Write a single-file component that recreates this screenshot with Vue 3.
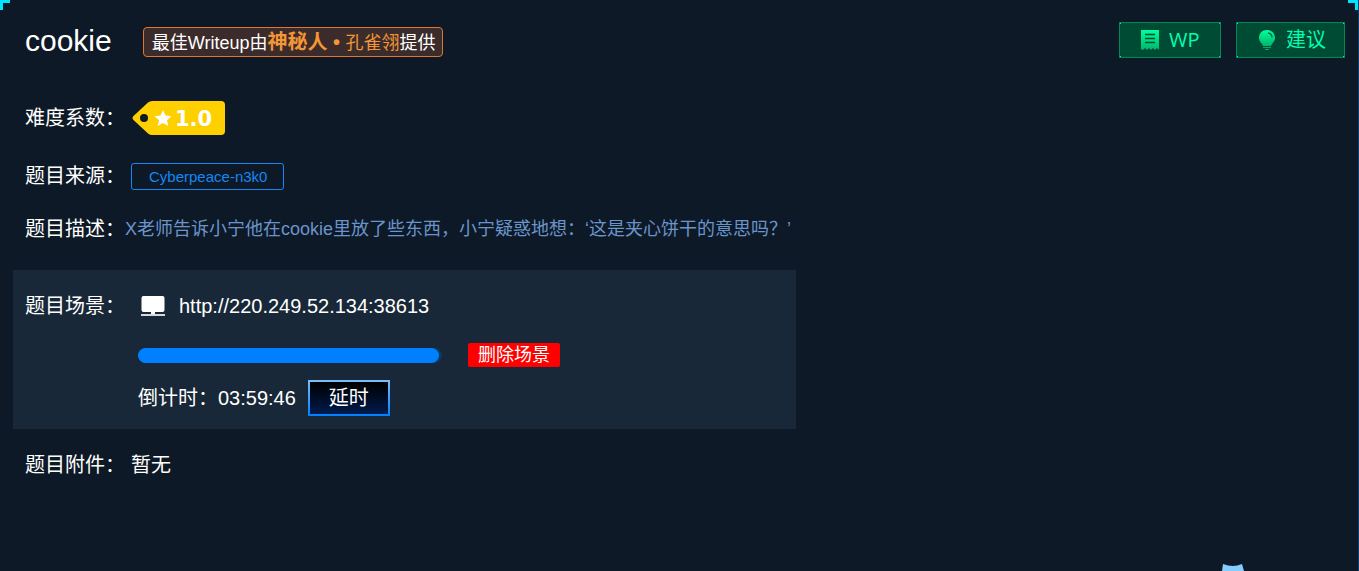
<script setup>
import { ref } from 'vue'

const url = 'http://220.249.52.134:38613'
const remaining = ref('03:59:46')
const progress = ref(99)
</script>

<template>
  <main class="page">
    <svg class="corner corner-left" viewBox="0 0 10 10" aria-hidden="true"><path d="M0 0H10V3H3V10H0Z" /></svg>
    <svg class="corner corner-right" viewBox="0 0 10 10" aria-hidden="true"><path d="M0 0H10V10H7V3H0Z" /></svg>

    <header class="header">
      <h1 class="title">cookie</h1>
      <p class="writeup">最佳Writeup由<b>神秘人&nbsp;•&nbsp;</b><span>孔雀翎</span>提供</p>
      <div class="actions">
        <button type="button" class="action">
          <svg width="20" height="22" viewBox="0 0 20 22" aria-hidden="true">
            <defs>
              <linearGradient id="mint" x1="0" y1="0" x2="0" y2="1">
                <stop offset="0" stop-color="#00ff9c" />
                <stop offset="1" stop-color="#00b56b" />
              </linearGradient>
            </defs>
            <path fill="url(#mint)" d="M1 1H19V21L17 19L15 21L13 19L11 21L9 19L7 21L5 19L3 21L1 20Z" />
            <path d="M5 5.500H15M5 9.500H15M5 13.500H15" stroke="#004b34" stroke-width="1.300" />
          </svg>
          <span>WP</span>
        </button>
        <button type="button" class="action">
          <svg width="20" height="22" viewBox="0 0 20 22" aria-hidden="true">
            <path fill="url(#mint)" d="M10 1C5 1 2 4.500 2 9C2 12.500 5 14 6 17H14C15 14 18 12.500 18 9C18 4.500 15 1 10 1Z" />
            <path d="M11 4C13.500 4.200 15 6 15 8.500" fill="none" stroke="#00633f" stroke-width="1.300" />
            <path d="M6 18.500H14M8 20.500H12" stroke="#00a966" stroke-width="1.200" />
          </svg>
          <span>建议</span>
        </button>
      </div>
    </header>

    <section class="row difficulty">
      <span class="label">难度系数：</span>
      <svg class="tag" width="94" height="34" viewBox="0 0 94 34" role="img" aria-label="1.0">
        <path fill="#ffd000" d="M1.500 15L16 1.500Q18 0 20 0H89Q93 0 93 4V30Q93 34 89 34H20Q18 34 16 32.500L1.500 19Q-.5 17 1.500 15Z" />
        <circle cx="12" cy="17" r="4" fill="#0d1926" />
        <path fill="#fff" d="M31 9L33.500 14.500L39.500 15.200L35 19.200L36.300 25L31 22L25.700 25L27 19.200L22.500 15.200L28.500 14.500Z" />
        <text x="43" y="25" class="tag-text">1.0</text>
      </svg>
    </section>

    <section class="row source">
      <span class="label">题目来源：</span>
      <a href="#" class="source-link">Cyberpeace-n3k0</a>
    </section>

    <section class="row description">
      <span class="label">题目描述：</span>
      <p>X老师告诉小宁他在cookie里放了些东西，小宁疑惑地想：‘这是夹心饼干的意思吗？’</p>
    </section>

    <section class="scene">
      <span class="label">题目场景：</span>
      <div class="scene-body">
        <div class="address">
          <svg width="24" height="22" viewBox="0 0 24 22" aria-hidden="true">
            <rect x=".5" y="1" width="23" height="16" rx="2" fill="#fff" />
            <path fill="#fff" d="M10 17H14V19H10Z" />
            <path fill="#d5d9dd" d="M0 19H24V21H0Z" />
          </svg>
          <span>{{ url }}</span>
        </div>
        <div class="running">
          <div class="track" role="progressbar" aria-label="倒计时" :aria-valuenow="progress">
            <div class="bar" :style="{ width: progress + '%' }"></div>
          </div>
          <button type="button" class="delete">删除场景</button>
        </div>
        <div class="countdown">
          <span>倒计时：{{ remaining }}</span>
          <button type="button" class="extend">延时</button>
        </div>
      </div>
    </section>

    <section class="row attachment">
      <span class="label">题目附件：</span>
      <span>暂无</span>
    </section>

    <svg class="mascot" viewBox="0 0 24 8" aria-hidden="true">
      <path fill="#86ccff" d="M2 1Q12 5 21 1L23 8H1Z" />
    </svg>
  </main>
</template>

<style>
body {
  margin: 0;
  background: #0d1926;
}
</style>

<style scoped>
.page {
  position: relative;
  box-sizing: border-box;
  min-height: 100vh;
  padding: 22px 13px 24px;
  overflow: hidden;
  border-right: 1px solid #073f72;
  background: #0d1926;
  color: #fff;
  font-family: "Liberation Sans", "Noto Sans CJK SC", sans-serif;
  font-size: 20px;
  line-height: 28px;
}
h1,
p {
  margin: 0;
  font-weight: 400;
}
button {
  font-family: inherit;
  cursor: pointer;
}
.corner {
  position: absolute;
  top: 0;
  width: 10px;
  height: 10px;
  fill: #00e5ff;
}
.corner-left {
  left: 0;
}
.corner-right {
  right: 0;
}
.header {
  display: flex;
  align-items: flex-start;
  padding-left: 12px;
}
.title {
  font-size: 30px;
  line-height: 38px;
}
.writeup {
  margin: 5px 0 0 31px;
  padding: 2px 6px 0 8px;
  border: 1px solid #e0752d;
  border-radius: 4px;
  background: #3b2b2a;
  font-size: 18px;
  line-height: 26px;
  white-space: nowrap;
}
.writeup b {
  font-size: 20px;
  line-height: 20px;
}
.writeup b,
.writeup span {
  color: #f29636;
}
.actions {
  display: flex;
  gap: 15px;
  margin-left: auto;
}
.action {
  display: flex;
  align-items: center;
  gap: 9px;
  min-width: 102px;
  height: 36px;
  padding: 0 18px 0 20px;
  border: 1px solid #008855;
  background:
    linear-gradient(#00ffa0, #00ffa0) left top / 2px 2px no-repeat,
    linear-gradient(#00ffa0, #00ffa0) right top / 2px 2px no-repeat,
    linear-gradient(#00ffa0, #00ffa0) left bottom / 2px 2px no-repeat,
    linear-gradient(#00ffa0, #00ffa0) right bottom / 2px 2px no-repeat,
    #004b34;
  background-origin: border-box;
  color: #00ffb0;
  font-family: "Open Sans", "Noto Sans CJK SC", sans-serif;
  font-size: 20px;
  line-height: 34px;
}
.row {
  display: flex;
  align-items: center;
  padding-left: 12px;
}
.label {
  flex: 0 0 106px;
  white-space: nowrap;
}
.difficulty {
  margin-top: 41px;
}
.tag {
  margin-left: 1px;
}
.tag-text {
  fill: #fff;
  font: 700 21px "DejaVu Sans", sans-serif;
}
.source {
  margin-top: 27px;
}
.source-link {
  padding: 0 16px 0 17px;
  border: 1px solid #1488f5;
  border-radius: 3px;
  color: #1488f5;
  font-size: 15px;
  line-height: 25px;
  text-decoration: none;
}
.description {
  margin-top: 25px;
}
.description .label {
  flex-basis: 100px;
}
.description p {
  color: #6b94cb;
  font-size: 18px;
}
.scene {
  display: flex;
  box-sizing: border-box;
  width: 58.8%;
  margin-top: 27px;
  padding: 22px 12px 13px;
  background: #182838;
}
.scene-body {
  flex: 1;
  padding-left: 7px;
}
.address {
  display: flex;
  align-items: center;
  gap: 14px;
  padding-left: 3px;
}
.running {
  display: flex;
  align-items: center;
  gap: 26px;
  margin-top: 23px;
}
.track {
  width: 304px;
  height: 15px;
  border-radius: 8px;
  background: #0b3a62;
}
.bar {
  height: 100%;
  border-radius: 8px;
  background: #0080ff;
}
.delete {
  height: 24px;
  padding: 0 10px;
  border: 0;
  border-radius: 2px;
  background: #f00;
  color: #fff;
  font-size: 18px;
  line-height: 24px;
}
.countdown {
  display: flex;
  align-items: center;
  gap: 12px;
  margin-top: 13px;
}
.extend {
  height: 36px;
  padding: 0 19px;
  border: 2px solid;
  border-image: linear-gradient(#78bfff, #0080ff) 2;
  background: linear-gradient(#000, #001b4d);
  color: #fff;
  font-size: 20px;
  line-height: 32px;
}
.attachment {
  margin-top: 22px;
}
.mascot {
  position: absolute;
  right: 113px;
  bottom: 0;
  width: 24px;
  height: 8px;
}
</style>
